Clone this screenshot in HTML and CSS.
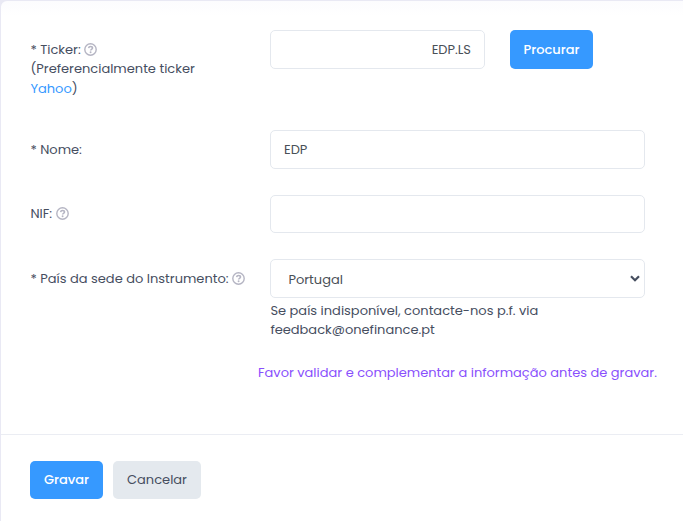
FILE: index.html
```html
<!DOCTYPE html>
<html lang="pt">
<head>
<meta charset="utf-8">
<title>Instrumento</title>
<link rel="stylesheet" href="styles.css">
</head>
<body>
<svg class="sprite" aria-hidden="true">
  <symbol id="help" viewBox="0 0 13 13">
    <circle cx="6.5" cy="6.5" r="5.7" fill="none" stroke="currentColor" stroke-width="1.4"/>
    <path d="M4.6 5.1C4.8 4 5.5 3.5 6.5 3.5C7.7 3.5 8.5 4.1 8.5 5.1C8.5 6.4 6.6 6.3 6.6 7.6" fill="none" stroke="currentColor" stroke-width="1.6"/>
    <circle cx="6.6" cy="9.2" r=".95" fill="currentColor"/>
  </symbol>
</svg>
<form class="card">
  <div class="body">
    <div class="row row-ticker">
      <div class="label">* Ticker: <svg class="help"><use href="#help"/></svg><br>(Preferencialmente ticker<br><a>Yahoo</a>)</div>
      <div class="search"><input class="control right" type="text" value="EDP.LS"><button class="btn primary procurar" type="button">Procurar</button></div>
    </div>
    <div class="row row-nome">
      <div class="label">* Nome:</div>
      <input class="control" type="text" value="EDP">
    </div>
    <div class="row row-nif">
      <div class="label">NIF: <svg class="help"><use href="#help"/></svg></div>
      <input class="control" type="text">
    </div>
    <div class="row row-pais">
      <div class="label">* País da sede do Instrumento: <svg class="help"><use href="#help"/></svg></div>
      <div>
        <div class="control select"><span>Portugal</span><svg class="chevron" viewBox="0 0 10 7"><path d="M1 1.2L5 5.2L9 1.2" fill="none" stroke="currentColor" stroke-width="2.2"/></svg></div>
        <div class="hint">Se país indisponível, contacte-nos p.f. via<br>feedback@onefinance.pt</div>
      </div>
    </div>
    <p class="notice">Favor validar e complementar a informação antes de gravar.</p>
  </div>
  <div class="footer">
    <button class="btn primary gravar" type="button">Gravar</button>
    <button class="btn secondary cancelar" type="button">Cancelar</button>
  </div>
</form>
</body>
</html>
```
FILE: styles.css
```css
* { box-sizing: border-box; }
body {
  margin: 0;
  padding: 1px 0 0 1px;
  height: 521px;
  overflow: hidden;
  background: #e9e9f4;
  font: 13px/19.5px Poppins, Inter, "Open Sans", sans-serif;
  color: #464e5f;
}
.sprite { display: none; }
.card {
  width: 700px;
  height: 540px;
  background: linear-gradient(#fcfcfe, #fff 15px);
  border-radius: 6px;
}
.body { height: 433px; padding: 29px 0 0 29px; }
.row {
  display: grid;
  grid-template-columns: 240px 375px;
  align-items: start;
}
.row-ticker { height: 100px; }
.row-nome { height: 65px; }
.row-nif { height: 64px; }
.row-pais { height: 104px; }
.label { padding: 9.5px 0 0 0.4px; white-space: nowrap; }
.row-nif .label { padding-top: 9px; }
.label a { color: #3699ff; }
.help { width: 13px; height: 13px; color: #b5b5c3; vertical-align: -2px; }
.control {
  display: block;
  width: 375px;
  height: 39px;
  padding: 0 13px;
  border: 1px solid #e4e8ee;
  border-radius: 5px;
  background: #fff;
  color: #495057;
  font: inherit;
  outline: 0;
}
.row-nif .control { height: 38px; }
.search { display: flex; gap: 25px; }
.right { width: 215px; text-align: right; }
.select { display: flex; align-items: center; justify-content: space-between; padding: 2px 4px 0 17.4px; }
.chevron { width: 10px; height: 7px; margin-top: -3px; color: #464e5f; }
.hint { padding: 2.5px 0 0 0.4px; white-space: nowrap; }
.notice {
  margin: 0 0 0 228px;
  color: #8950fc;
  white-space: nowrap;
}
.footer {
  display: flex;
  gap: 10px;
  padding: 26px 29px;
  border-top: 1px solid #ebedf3;
}
.btn {
  height: 38px;
  padding: 0;
  border: 0;
  border-radius: 5px;
  font: inherit;
}
.primary { background: #3699ff; color: #fff; font-weight: 500; }
.secondary { background: #e4e9ee; color: #464e5f; }
.procurar { width: 83px; height: 39px; }
.gravar { width: 73px; }
.cancelar { width: 88px; }
```
